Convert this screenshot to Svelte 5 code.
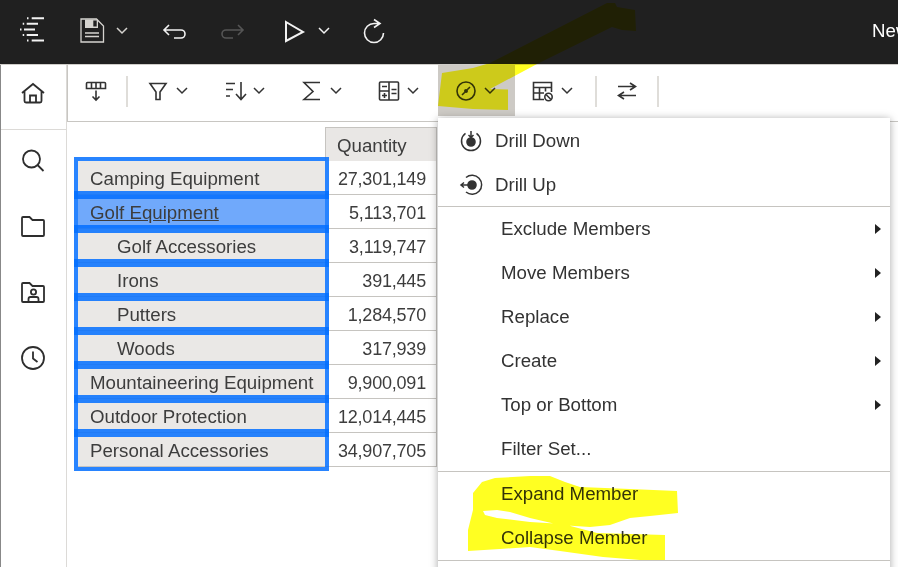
<script>
    const rows = [
        { name: 'Camping Equipment', qty: '27,301,149' },
        { name: 'Golf Equipment', qty: '5,113,701', selected: true },
        { name: 'Golf Accessories', qty: '3,119,747', child: true },
        { name: 'Irons', qty: '391,445', child: true },
        { name: 'Putters', qty: '1,284,570', child: true },
        { name: 'Woods', qty: '317,939', child: true },
        { name: 'Mountaineering Equipment', qty: '9,900,091' },
        { name: 'Outdoor Protection', qty: '12,014,445' },
        { name: 'Personal Accessories', qty: '34,907,705' }
    ];

    const memberItems = [
        { label: 'Exclude Members', sub: true },
        { label: 'Move Members', sub: true },
        { label: 'Replace', sub: true },
        { label: 'Create', sub: true },
        { label: 'Top or Bottom', sub: true },
        { label: 'Filter Set...' }
    ];
</script>

{#snippet chev()}
    <svg class="chev" viewBox="0 0 14 8" width="14" height="8"><path d="M2 1l5 5 5-5" /></svg>
{/snippet}

<div class="page">
    <header class="topbar">
        <div class="top-item logo">
            <svg viewBox="0 0 26 26" width="26" height="26">
                <path d="M7 .2h1.500M11.700 .2H24M2.700 5.700h1.500M6.700 5.700H18M0 11.400h1.500M4 11.400h11M2.700 17.100h1.500M6.700 17.100H18M7 22.600h1.500M11.700 22.600H24" />
            </svg>
        </div>
        <div class="top-item save">
            <svg viewBox="0 0 24 24" width="24" height="24">
                <path class="thin" d="M1 0h15.500L23.500 7v16H1z" />
                <path class="solid" d="M5 .5h13V9H5z" />
                <path class="notch" d="M13.300 1.500h3.400v6h-3.400z" />
                <path class="thin" d="M5 14h14M5 17.500h14" />
            </svg>
            {@render chev()}
        </div>
        <div class="top-item undo">
            <svg viewBox="0 0 24 24" width="24" height="24"><path d="M7 6l-5 5 5 5M2 11h17a4 4 0 0 1 0 8h-7" /></svg>
        </div>
        <div class="top-item undo off">
            <svg viewBox="0 0 24 24" width="24" height="24"><path d="M17 6l5 5-5 5M22 11H5a4 4 0 0 0 0 8h7" /></svg>
        </div>
        <div class="top-item play">
            <svg viewBox="0 0 24 24" width="24" height="24"><path d="M4 3l17 10L4 22z" /></svg>
            {@render chev()}
        </div>
        <div class="top-item refresh">
            <svg viewBox="0 0 24 24" width="24" height="24">
                <path d="M12 4.500a9.500 9.500 0 1 0 9.500 9.500M18 4.500h-6M12 .5l6 4-6 4" />
            </svg>
        </div>
        <div class="doc-title">New</div>
    </header>

    <div class="body">
        <nav class="rail">
            <div class="rail-home">
                <svg viewBox="0 0 24 24" width="24" height="24">
                    <path d="M1 13L12 4l11 9M3.500 11v10a1.500 1.500 0 0 0 1.500 1.500h14a1.500 1.500 0 0 0 1.500-1.500V11M9 22.500V15.500h6v7" />
                </svg>
            </div>
            <div class="rail-items">
                <div class="rail-item">
                    <svg viewBox="0 0 24 24" width="24" height="24">
                        <circle cx="10.500" cy="11" r="8.500" /><path d="M16.500 17l6 6" />
                    </svg>
                </div>
                <div class="rail-item">
                    <svg viewBox="0 0 24 24" width="24" height="24">
                        <path d="M1 4a1 1 0 0 1 1-1h6.500l3 3H22a1 1 0 0 1 1 1v14a1 1 0 0 1-1 1H2a1 1 0 0 1-1-1z" />
                    </svg>
                </div>
                <div class="rail-item">
                    <svg viewBox="0 0 24 24" width="24" height="24">
                        <path d="M1 4a1 1 0 0 1 1-1h6.500l3 3H22a1 1 0 0 1 1 1v14a1 1 0 0 1-1 1H2a1 1 0 0 1-1-1z" />
                        <circle cx="12.500" cy="12" r="2.600" />
                        <path d="M7.500 21.500v-2.500a2 2 0 0 1 2-2h6a2 2 0 0 1 2 2v2.500" />
                    </svg>
                </div>
                <div class="rail-item">
                    <svg viewBox="0 0 24 24" width="24" height="24">
                        <circle cx="12" cy="12" r="11" /><path d="M12 5.500V12.500l4.500 3.500" />
                    </svg>
                </div>
            </div>
        </nav>

        <main class="content">
            <div class="toolbar">
                <div class="tool first">
                    <svg viewBox="0 0 24 24" width="24" height="24">
                        <path d="M3.500 3.500h17a1 1 0 0 1 1 1v5h-19v-5a1 1 0 0 1 1-1zM7.500 3.500v6M12 3.500v6M16.500 3.500v6" />
                        <path d="M12 11.500v9.500M8.500 17.500l3.500 3.500 3.500-3.500" />
                    </svg>
                </div>
                <span class="sep"></span>
                <div class="tool">
                    <svg viewBox="0 0 24 24" width="24" height="24"><path d="M4 4.500h16l-6 8.500v7.500h-4V13z" /></svg>
                    {@render chev()}
                </div>
                <div class="tool">
                    <svg viewBox="0 0 24 24" width="24" height="24">
                        <path d="M3 4.500h9M3 10.500h7M3 17h4M18 3v17M13 15l5 5.500 5-5.500" />
                    </svg>
                    {@render chev()}
                </div>
                <div class="tool">
                    <svg viewBox="0 0 24 24" width="24" height="24"><path d="M20 3.500H4l9 9-9 8h16" /></svg>
                    {@render chev()}
                </div>
                <div class="tool">
                    <svg viewBox="0 0 24 24" width="24" height="24">
                        <rect x="2.500" y="3" width="19" height="18" rx="1" />
                        <path d="M12 3v18M2.500 12H12M5 7.500h5M5 16.500h5M7.500 14v5M14.500 10.500h5M14.500 14.500h5" />
                    </svg>
                    {@render chev()}
                </div>
                <div class="tool active">
                    <svg viewBox="0 0 24 24" width="24" height="24">
                        <circle cx="12" cy="12" r="9" />
                        <path d="M8 16l2.800-2.800M13.200 10.800L16 8" />
                        <circle class="dot" cx="12" cy="12" r="1.200" />
                    </svg>
                    {@render chev()}
                    <div class="menu">
                        <div class="group top">
                            <div class="item with-icon">
                                <svg viewBox="0 0 24 24" width="24" height="24">
                                    <path d="M6.500 4.300A9.500 9.500 0 1 0 17.500 4.300M12 2v6M9.500 6l2.500 2.500L14.500 6" />
                                    <circle class="dot" cx="12" cy="13" r="4" />
                                </svg>
                                <span>Drill Down</span>
                            </div>
                            <div class="item with-icon">
                                <svg viewBox="0 0 24 24" width="24" height="24">
                                    <path d="M7 4.500A9.500 9.500 0 1 1 7 19M2 12h7M5 9.500L2 12l3 2.500" />
                                    <circle class="dot" cx="13" cy="12" r="4" />
                                </svg>
                                <span>Drill Up</span>
                            </div>
                        </div>
                        <div class="group">
                            {#each memberItems as it}
                                <div class="item">
                                    <span>{it.label}</span>
                                    {#if it.sub}<i class="arrow"></i>{/if}
                                </div>
                            {/each}
                        </div>
                        <div class="group">
                            <div class="item"><span>Expand Member</span></div>
                            <div class="item"><span>Collapse Member</span></div>
                        </div>
                    </div>
                </div>
                <div class="tool">
                    <svg viewBox="0 0 24 24" width="24" height="24">
                        <path d="M13 20.500H2.500v-17h18V13M2.500 8.500h18M2.500 14H13M8.500 8.500v12M14.500 8.500v4" />
                        <circle cx="17.500" cy="18" r="3.700" />
                        <path d="M15 15.500l5 5" />
                    </svg>
                    {@render chev()}
                </div>
                <span class="sep wide"></span>
                <div class="tool swap">
                    <svg viewBox="0 0 24 24" width="24" height="24">
                        <path d="M3 7.500h17M15 4l5.500 3.500L15 11M21 16.500H3.500M9 13l-5.500 3.500L9 20" />
                    </svg>
                </div>
                <span class="sep"></span>
            </div>

            <table class="crosstab">
                <thead>
                    <tr>
                        <th class="blank"></th>
                        <th class="head">Quantity</th>
                    </tr>
                </thead>
                <tbody>
                    {#each rows as r}
                        <tr>
                            <td class="label" class:selected={r.selected} class:child={r.child}>
                                <span>{r.name}</span>
                            </td>
                            <td class="num">{r.qty}</td>
                        </tr>
                    {/each}
                </tbody>
            </table>
        </main>
    </div>

    <!-- marker scribbles somebody drew over the screenshot -->
    <svg class="marker" viewBox="0 0 898 567" width="898" height="567">
        <path d="M607 3l8 0 2 4 18 3 1 21-14-1-10-3-75 37-47 25 18 .5V110l-35-1-35-3 4-33 31-5 17-5z" />
        <path d="M482 482l13-4 35-2h20l15 6 15 5 50 2 47 2 1 22-28 3-20 2-20 7-20 2-30-2-30-7-20-6-13-2-14 1 2 4 12 3 33 4 33 2 34 9 68 2v25l-25 0-37-3-43-6-30-4-30 2-32 2v-21l5-20v-17z" />
    </svg>
</div>

<style>
    :global(body) {
        background: #fff;
    }

    .page {
        position: relative;
        width: 898px;
        height: 567px;
        overflow: hidden;
        background: #fff;
        color: #3d3d3d;
        font-family: "Liberation Sans", Arial, sans-serif;
        font-size: 18.7px;
    }

    svg {
        display: block;
        flex: none;
        overflow: visible;
    }

    svg path, svg rect, svg circle {
        fill: none;
        stroke: currentColor;
        stroke-width: 1.6;
    }

    svg .dot {
        fill: currentColor;
    }

    .chev path {
        stroke-width: 1.500;
    }

    .topbar {
        display: flex;
        align-items: center;
        height: 65px;
        box-sizing: border-box;
        padding-bottom: 3px;
        background: #202020;
        border-bottom: 1px solid #cfcdc9;
        color: #f2f2f2;
    }

    .top-item {
        display: flex;
        align-items: center;
        flex: none;
    }

    .logo {
        width: 66px;
        padding-left: 20px;
        box-sizing: border-box;
    }

    .logo path {
        stroke-width: 2;
    }

    .save {
        width: 78px;
        padding-left: 14px;
        box-sizing: border-box;
        gap: 11px;
        color: #d5d3cf;
    }

    .save path.thin {
        stroke-width: 1.300;
    }

    .save path.solid {
        fill: #d5d3cf;
        stroke: none;
    }

    .save path.notch {
        fill: #202020;
        stroke: none;
    }

    .undo {
        width: 59px;
        padding-left: 18px;
        box-sizing: border-box;
    }

    .undo.off {
        width: 60px;
        color: #555;
    }

    .play {
        width: 81px;
        padding-left: 19px;
        box-sizing: border-box;
        gap: 11px;
    }

    .play svg:first-child path {
        stroke-width: 2;
    }

    .refresh {
        width: 60px;
        padding-left: 18px;
        box-sizing: border-box;
    }

    .doc-title {
        margin-left: 468px;
        flex: none;
        white-space: nowrap;
        color: #fff;
    }

    .body {
        display: flex;
        height: 502px;
    }

    .rail {
        flex: none;
        width: 67px;
        box-sizing: border-box;
        border-left: 1px solid #888;
        border-right: 1px solid #dcdad7;
        color: #2e2e2e;
    }

    .rail svg path, .rail svg circle {
        stroke-width: 1.800;
    }

    .rail-home {
        display: flex;
        justify-content: center;
        height: 65px;
        box-sizing: border-box;
        padding-top: 15px;
        border-bottom: 1px solid #dcdad7;
    }

    .rail-home svg, .rail-item svg {
        margin-left: -2px;
    }

    .rail-items {
        margin-top: -3px;
    }

    .rail-item {
        display: flex;
        justify-content: center;
        align-items: center;
        height: 66px;
    }

    .content {
        flex: 1;
        min-width: 0;
    }

    .toolbar {
        display: flex;
        align-items: flex-start;
        height: 57px;
        box-sizing: border-box;
        border-left: 1px solid #c8c6c2;
        border-bottom: 1px solid #c8c6c2;
        color: #333;
    }

    .tool {
        position: relative;
        flex: none;
        display: flex;
        align-items: center;
        gap: 5px;
        width: 77px;
        height: 51px;
        box-sizing: border-box;
        padding-left: 16px;
    }

    .tool.first {
        width: 58px;
    }

    .tool.swap {
        width: 60px;
        padding-left: 18px;
    }

    .tool.active {
        background: #cdcac5;
    }

    .sep {
        flex: none;
        width: 2px;
        height: 31px;
        margin: 11px 2px 0 0;
        background: #dfddd9;
    }

    .sep.wide {
        margin-left: 3px;
        margin-right: 0;
    }

    .menu {
        position: absolute;
        left: 0;
        top: 53px;
        z-index: 2;
        width: 452px;
        height: 480px;
        background: #fff;
        box-shadow: 0 1px 8px rgba(0, 0, 0, 0.35);
    }

    .group {
        border-bottom: 1px solid #c6c4c0;
    }

    .item {
        display: flex;
        align-items: center;
        justify-content: space-between;
        height: 44px;
        padding: 0 9px 0 63px;
    }

    .top .item {
        box-sizing: border-box;
        padding-top: 2px;
    }

    .item.with-icon {
        justify-content: flex-start;
        gap: 12px;
        padding-left: 21px;
    }

    .item.with-icon svg path {
        stroke-width: 1.500;
    }

    .arrow {
        width: 0;
        height: 0;
        border-left: 6px solid #222;
        border-top: 5px solid transparent;
        border-bottom: 5px solid transparent;
    }

    .crosstab {
        margin: 5px 0 0 11px;
        border-collapse: separate;
        border-spacing: 0;
        table-layout: fixed;
        width: 359px;
    }

    .crosstab th {
        padding: 0;
        font-weight: normal;
    }

    .blank {
        width: 247px;
    }

    .head {
        height: 34px;
        box-sizing: border-box;
        padding: 2px 0 0 11px !important;
        text-align: left;
        background: #e9e7e5;
        border: 1px solid #c6c4c0;
        border-bottom: 0;
    }

    .crosstab td {
        height: 34px;
        box-sizing: border-box;
        padding: 3px 0 0;
    }

    .label {
        padding-left: 12px !important;
        background: #eae8e6;
        border-bottom: 1px solid #c6c4c0;
        outline: 4px solid rgba(2, 110, 255, 0.85);
        white-space: nowrap;
    }

    .label.selected {
        background: #70a9fb;
    }

    .label.selected span {
        text-decoration: underline;
    }

    .label.child {
        padding-left: 39px !important;
    }

    .num {
        padding-right: 10px !important;
        font-size: 18px;
        letter-spacing: -0.2px;
        text-align: right;
        border-right: 1px solid #c6c4c0;
        border-bottom: 1px solid #c6c4c0;
    }

    .marker {
        position: absolute;
        left: 0;
        top: 0;
        z-index: 5;
        mix-blend-mode: multiply;
        pointer-events: none;
    }

    .marker path {
        fill: #ffff22;
        stroke: none;
    }
</style>
